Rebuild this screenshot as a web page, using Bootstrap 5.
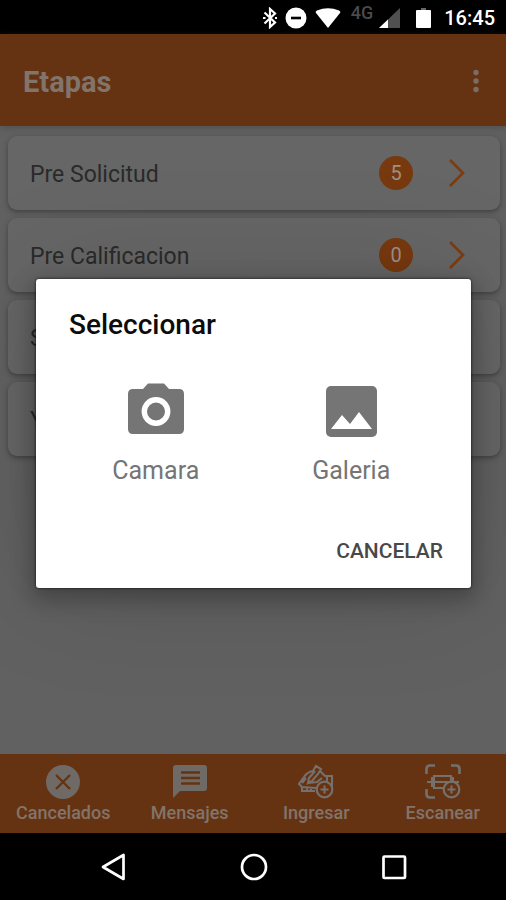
<!DOCTYPE html>
<html lang="es">
<head>
<meta charset="utf-8">
<meta name="viewport" content="width=device-width, initial-scale=1">
<title>Etapas</title>
<link href="https://cdn.jsdelivr.net/npm/bootstrap@5.3.0/dist/css/bootstrap.min.css" rel="stylesheet">
<style>
  :root { --brand: #663312; --brand-accent: #78390f; --on-brand: #82746b; --page: #616161; --tile: #666; }
  body { font-family: Roboto, "Liberation Sans", sans-serif; background: var(--page); }
  svg { display: block; flex: none; }
  .status-bar { height: 34px; padding: 2px 11px 0 0; font-size: 20px; line-height: 24px; font-weight: 500; }
  .network-type { font-size: 18px; line-height: 20px; color: #4a4a4a; margin: 0 6px 10px 10px; }
  .status-bar .clock { margin-left: 13px; }
  .app-bar { background: var(--brand); color: var(--on-brand); height: 92px; padding: 3px 16px 0 23px; box-shadow: 0 2px 6px #4448; }
  .app-bar h1 { font-size: 29px; line-height: 36px; font-weight: 700; }
  .stage-list { padding: 10px 6px 0 8px; }
  .stage { height: 74px; border-radius: 9px; background: var(--tile); color: #2a2a2a; padding: 0 34px 0 22px; font-size: 23px; line-height: 28px; box-shadow: 0 2px 5px #3a3a3acc; }
  .stage:hover { color: #2a2a2a; }
  .stage-name { padding-top: 3px; }
  .count { width: 34px; height: 34px; background: var(--brand-accent); color: #9c9189; font-size: 20px; margin-right: 33px; }
  .shade { position: absolute; inset: 0; padding: 0 35px 0 36px; }
  .picker { border-radius: 3px; padding: 28px 22px 17px; box-shadow: 0 8px 22px 4px #0004, 0 0 120px #0002, 0 0 3px #000c; }
  .picker h2 { font-size: 28px; line-height: 36px; font-weight: 500; color: #0c0c0c; padding-left: 11px; }
  .options { margin-top: 36px; }
  .option { color: #757575; font-size: 25px; line-height: 32px; gap: 18px; }
  .cancel { color: #484848; font-size: 21px; line-height: 28px; font-weight: 500; margin-top: 44px; padding: 6px; }
  .tabs { background: var(--brand); padding: 9px 0 8px; }
  .tab-link { color: var(--on-brand); font-size: 18px; line-height: 22px; font-weight: 500; gap: 3px; height: 62px; }
  .tab-link:hover { color: var(--on-brand); }
  .system-bar { height: 67px; padding: 0 97px 0 98px; }
</style>
<script src="https://cdn.jsdelivr.net/npm/bootstrap@5.3.0/dist/js/bootstrap.bundle.min.js"></script>
</head>
<body>
<div class="d-flex flex-column min-vh-100">
  <div class="status-bar bg-black text-white d-flex align-items-center justify-content-end">
    <svg width="14" height="22" viewBox="0 0 14 22" fill="none" stroke="#fff" stroke-width="2.200"><path d="M1.500 5.500L12 15.500 7 20V2l5 4.500L1.500 16.500"/><path d="M0 11h2.500M12 11h2"/></svg>
    <svg class="ms-2" width="22" height="22" viewBox="0 0 22 22"><circle cx="11" cy="11" r="10.5" fill="#fff"/><path d="M6 11h10" stroke="#000" stroke-width="2.600"/></svg>
    <svg class="ms-2" width="26" height="20" viewBox="0 0 26 20"><path d="M13 20L1 5Q0 3.500 2 2.500Q13-2 24 2.500Q26 3.500 25 5z" fill="#fff"/></svg>
    <span class="network-type">4G</span>
    <svg width="21" height="20" viewBox="0 0 21 20"><path d="M21 0v20H0z" fill="#505050"/><path d="M9 11.500V20H0z" fill="#fff"/></svg>
    <svg class="ms-3" width="15" height="20" viewBox="0 0 15 20"><path d="M5 0h5v2H5z" fill="#666"/><rect y="2" width="15" height="18" rx="1" fill="#fff"/></svg>
    <span class="clock">16:45</span>
  </div>

  <div class="position-relative flex-grow-1 d-flex flex-column">
    <header class="app-bar d-flex align-items-center justify-content-between">
      <h1 class="m-0">Etapas</h1>
      <button type="button" class="btn p-0 border-0" aria-label="Más opciones">
        <svg width="28" height="28" viewBox="0 0 28 28" fill="#7a6d65"><circle cx="14" cy="4.500" r="2.700"/><circle cx="14" cy="13" r="2.700"/><circle cx="14" cy="21.500" r="2.700"/></svg>
      </button>
    </header>

    <main class="stage-list flex-grow-1 d-flex flex-column gap-2">
      <a href="#" class="stage d-flex align-items-center text-decoration-none"><span class="stage-name flex-grow-1">Pre Solicitud</span><span class="count rounded-circle d-flex align-items-center justify-content-center">5</span>
        <svg width="20" height="30" viewBox="0 0 20 30" fill="none" stroke="#7c3c10" stroke-width="2.700"><path d="M4 2l13 13L4 28"/></svg></a>
      <a href="#" class="stage d-flex align-items-center text-decoration-none"><span class="stage-name flex-grow-1">Pre Calificacion</span><span class="count rounded-circle d-flex align-items-center justify-content-center">0</span>
        <svg width="20" height="30" viewBox="0 0 20 30" fill="none" stroke="#7c3c10" stroke-width="2.700"><path d="M4 2l13 13L4 28"/></svg></a>
      <a href="#" class="stage d-flex align-items-center text-decoration-none"><span class="stage-name">S</span></a>
      <a href="#" class="stage d-flex align-items-center text-decoration-none"><span class="stage-name">Y</span></a>
    </main>

    <nav class="tabs row row-cols-4 g-0 text-center">
      <a href="#" class="tab-link col d-flex flex-column align-items-center text-decoration-none">
        <svg width="36" height="36" viewBox="0 0 36 36"><circle cx="18" cy="19" r="17" fill="#706a66"/><path d="M11 12l14 14M25 12L11 26" stroke="#663312" stroke-width="2.400"/></svg>Cancelados</a>
      <a href="#" class="tab-link col d-flex flex-column align-items-center text-decoration-none">
        <svg width="36" height="36" viewBox="0 0 36 36"><path d="M4 2h28q3 0 3 3v20q0 3-3 3H8l-7 7V5q0-3 3-3z" fill="#706a66"/><path d="M9 9.500h19M9 15h19M9 20.500h19" stroke="#663312" stroke-width="2.600"/></svg>Mensajes</a>
      <a href="#" class="tab-link col d-flex flex-column align-items-center text-decoration-none">
        <svg width="36" height="36" viewBox="0 0 36 36" fill="none" stroke="#76706c" stroke-width="2.100"><path d="M15 8q-6 1-9 6l-5 7 3 3v4h13M15 8l3-5 5 3-3 5-6 7-4 2 1-5 6-7M22 8l5 5h7v12M29 13v5M10 20l9-1 5-4M4 24l14 1M9 24v4M13 24v4M4 20l4-5"/><circle cx="26.500" cy="26.500" r="7.800" stroke-width="2.200"/><path d="M26.500 22.500v8M22.500 26.500h8"/></svg>Ingresar</a>
      <a href="#" class="tab-link col d-flex flex-column align-items-center text-decoration-none">
        <svg width="36" height="36" viewBox="0 0 36 36" fill="none" stroke="#76706c" stroke-width="2.100"><path d="M1.500 11V6q0-3.500 3.500-3.500h5M26 2.500h5q3.500 0 3.500 3.500v5M1.500 26v5q0 3.500 3.500 3.500h5" stroke-width="2.600"/><path d="M2 19h32M9 19v-6h17v6M9 19v6h10M9 15H7v8h2M26 15h2v4"/><circle cx="26.500" cy="26.500" r="7.800" stroke-width="2.200"/><path d="M26.500 22.500v8M22.500 26.500h8"/></svg>Escanear</a>
    </nav>

    <div class="shade d-flex align-items-center" role="dialog" aria-modal="true" aria-labelledby="picker-title">
      <section class="picker bg-white w-100">
        <h2 id="picker-title" class="mb-0">Seleccionar</h2>
        <div class="options row g-0 text-center">
          <div class="col-6 d-flex justify-content-center"><button type="button" class="option btn p-0 border-0 d-flex flex-column align-items-center">
            <svg width="58" height="58" viewBox="0 0 58 58"><path d="M6 10h10l5-5.500h16l5 5.500h10q5 0 5 5v35q0 5-5 5H6q-5 0-5-5V15q0-5 5-5z" fill="#757575"/><circle cx="29" cy="32.500" r="11.700" fill="#757575" stroke="#fff" stroke-width="5.400"/></svg>Camara</button></div>
          <div class="col-6 d-flex justify-content-center"><button type="button" class="option btn p-0 border-0 d-flex flex-column align-items-center">
            <svg width="58" height="58" viewBox="0 0 58 58"><rect x="4" y="7" width="51" height="51" rx="5" fill="#757575"/><path d="M9 50l11-14 8 9 9-12 13 17z" fill="#fff"/></svg>Galeria</button></div>
        </div>
        <div class="d-flex justify-content-end"><button type="button" class="cancel btn border-0">CANCELAR</button></div>
      </section>
    </div>
  </div>

  <nav class="system-bar bg-black d-flex align-items-center justify-content-between" aria-label="Sistema">
    <button type="button" class="btn p-0 border-0" aria-label="Atrás"><svg width="30" height="30" viewBox="0 0 30 30" fill="none" stroke="#fff" stroke-width="2.700" stroke-linejoin="round"><path d="M25.500 3v24L5 15z"/></svg></button>
    <button type="button" class="btn p-0 border-0" aria-label="Inicio"><svg width="30" height="30" viewBox="0 0 30 30" fill="none" stroke="#fff" stroke-width="2.700"><circle cx="15" cy="15" r="12"/></svg></button>
    <button type="button" class="btn p-0 border-0" aria-label="Recientes"><svg width="30" height="30" viewBox="0 0 30 30" fill="none" stroke="#fff" stroke-width="2.700"><rect x="4.500" y="4.500" width="21.500" height="21.500" rx="1"/></svg></button>
  </nav>
</div>
</body>
</html>
